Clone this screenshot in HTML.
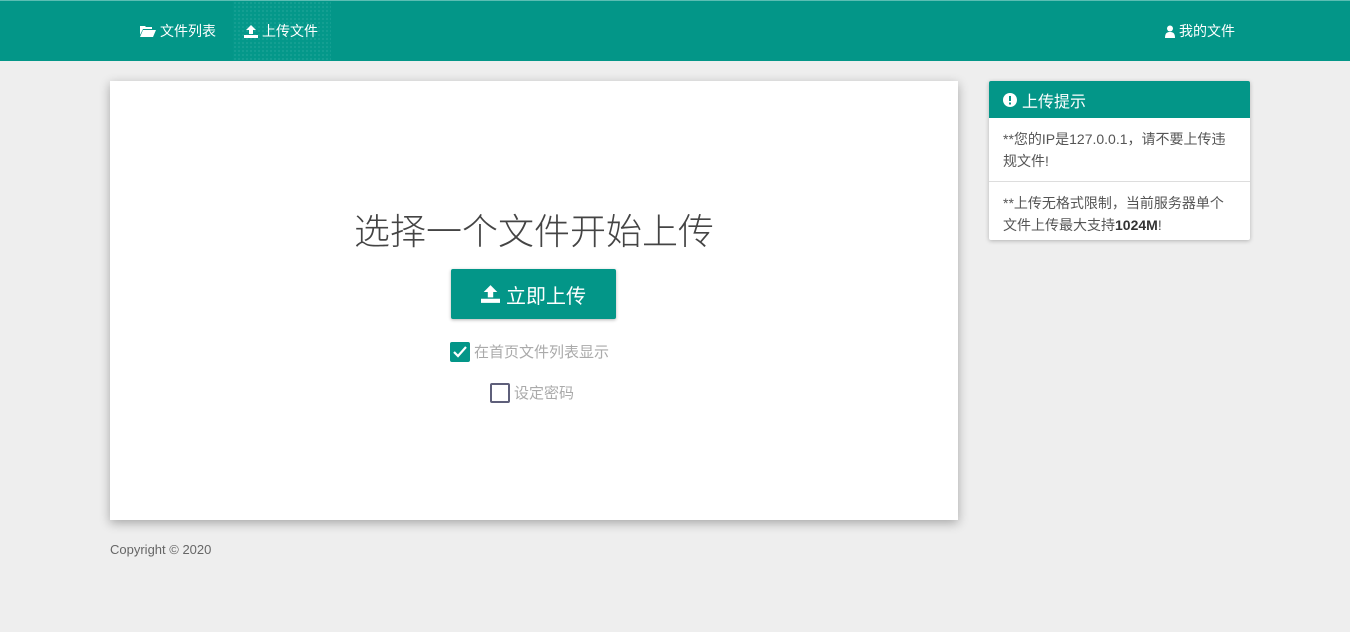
<!DOCTYPE html>
<html><head><meta charset="utf-8"><style>
*{box-sizing:border-box;margin:0;padding:0}
body{width:1350px;height:632px;background:#eee;font-family:"Liberation Sans","Noto Sans CJK SC",sans-serif;position:relative;overflow:hidden;color:#555}
.nav{position:absolute;left:0;top:0;width:1350px;height:61px;background:#039688;border-top:1px solid #5cbdb3}
.nav a{position:absolute;top:0;height:60px;line-height:60px;color:#fff;font-size:14px;text-decoration:none;display:flex;align-items:center;gap:4px}
.act{background:#04988a;background-image:radial-gradient(#3fb2a6 0.6px,transparent 0.8px);background-size:4px 4px}
.card{position:absolute;left:110px;top:81px;width:848px;height:439px;background:#fff;box-shadow:0 3px 10px rgba(0,0,0,.3)}
h1{position:absolute;left:0;width:848px;top:122px;text-align:center;font-weight:300;font-size:36px;color:#444}
.btn{position:absolute;left:341px;top:188px;width:165px;height:50px;background:#039688;border-radius:2px;color:#fff;font-size:20px;display:flex;align-items:center;justify-content:center;gap:6px;box-shadow:0 1px 3px rgba(0,0,0,.3)}
.chk{position:absolute;font-size:15px;color:#aaa;display:flex;align-items:center;gap:4px}
.box{width:20px;height:20px;border:2px solid #5e5f7a;border-radius:2px}
.panel{position:absolute;left:989px;top:81px;width:261px;height:159px;background:#fff;box-shadow:0 1px 4px rgba(0,0,0,.25);border-radius:2px}
.ph{height:37px;background:#039688;color:#fff;font-size:16px;display:flex;align-items:center;padding-left:14px;gap:5px;border-radius:2px 2px 0 0}
.pi{padding:10px 14px 9px;font-size:14px;line-height:22px;color:#555;white-space:nowrap}
.foot{position:absolute;left:110px;top:542px;font-size:13px;color:#666}
</style></head><body>
<div class="nav">
<a style="left:140px"><svg width="16" height="12" viewBox="0 0 16 12"><path d="M0 1h5l1 1h6v2H3L0 10z M3 5h13l-3 7H0z" fill="#fff"/></svg>文件列表</a>
<a class="act" style="left:233px;width:98px;padding-left:11px"><svg width="14" height="13" viewBox="0 0 14 13"><path d="M7 0l5 5H9v4H5V5H2z M0 10h14v3H0z" fill="#fff"/></svg>上传文件</a>
<a style="left:1165px"><svg width="10" height="13" viewBox="0 0 10 13"><circle cx="5" cy="3.5" r="3" fill="#fff"/><path d="M0 13c0-5 2-6 5-6s5 1 5 6z" fill="#fff"/></svg>我的文件</a>
</div>
<div class="card">
<h1>选择一个文件开始上传</h1>
<div class="btn"><svg width="19" height="18" viewBox="0 0 14 13"><path d="M7 0l5 5H9v4H5V5H2z M0 10h14v3H0z" fill="#fff"/></svg>立即上传</div>
<div class="chk" style="left:340px;top:260px"><div class="box" style="background:#039688;border-color:#039688;display:flex;align-items:center;justify-content:center"><svg width="14" height="12" viewBox="0 0 14 12"><path d="M1 6l4 4 8-9" stroke="#fff" stroke-width="2.2" fill="none"/></svg></div>在首页文件列表显示</div>
<div class="chk" style="left:380px;top:301px"><div class="box"></div>设定密码</div>
</div>
<div class="panel">
<div class="ph"><svg width="14" height="14" viewBox="0 0 14 14"><circle cx="7" cy="7" r="7" fill="#fff"/><rect x="6" y="3" width="2" height="5" fill="#039688"/><rect x="6" y="9.5" width="2" height="2" fill="#039688"/></svg>上传提示</div>
<div class="pi" style="border-bottom:1px solid #ddd">**您的IP是127.0.0.1，请不要上传违<br>规文件!</div>
<div class="pi">**上传无格式限制，当前服务器单个<br>文件上传最大支持<b style="color:#333">1024M</b>!</div>
</div>
<div class="foot">Copyright © 2020</div>
</body></html>
